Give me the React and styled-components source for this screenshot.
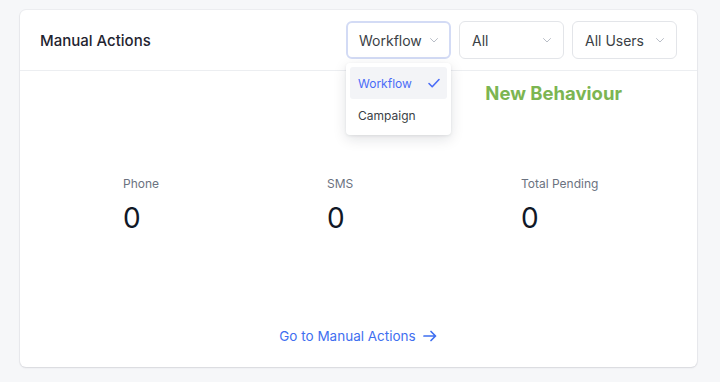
import styled, { createGlobalStyle } from 'styled-components';

const GlobalStyle = createGlobalStyle`
  html, body {
    margin: 0;
    padding: 0;
    background: #f6f7f9;
    font-family: Inter, "Noto Sans", sans-serif;
  }
`;

const filters = [
  { label: 'Workflow', width: 105, open: true },
  { label: 'All', width: 105 },
  { label: 'All Users', width: 105 },
];

const stats = [
  { label: 'Phone', value: 0 },
  { label: 'SMS', value: 0 },
  { label: 'Total Pending', value: 0 },
];

function Chevron() {
  return (
    <svg width="12" height="12" viewBox="0 0 12 12" fill="none">
      <path d="M2.5 4.5L6 8l3.5-3.5" stroke="#b9bec7" strokeWidth="1" strokeLinecap="round" strokeLinejoin="round" />
    </svg>
  );
}

function Check() {
  return (
    <svg width="14" height="14" viewBox="0 0 14 14" fill="none">
      <path d="M2 7.5l3.2 3.2L12 3.5" stroke="#4a6cf7" strokeWidth="1.6" strokeLinecap="round" strokeLinejoin="round" />
    </svg>
  );
}

function Arrow() {
  return (
    <svg width="16" height="16" viewBox="0 0 16 16" fill="none">
      <path d="M2 8h11.5M9 3.5L13.5 8 9 12.5" stroke="#3f6ff0" strokeWidth="1.7" strokeLinecap="round" strokeLinejoin="round" />
    </svg>
  );
}

export default function App() {
  return (
    <Page>
      <GlobalStyle />
      <Card>
        <Header>
          <Title>Manual Actions</Title>
          <Filters>
            {filters.map(({ label, width, open }) => (
              <SelectWrap key={label}>
                <Select $width={width} $focused={open}>
                  <span>{label}</span>
                  <Chevron />
                </Select>
                {open && (
                  <Menu>
                    <MenuItem $active>
                      <span>Workflow</span>
                      <Check />
                    </MenuItem>
                    <MenuItem>
                      <span>Campaign</span>
                    </MenuItem>
                  </Menu>
                )}
              </SelectWrap>
            ))}
          </Filters>
        </Header>
        <Body>
          <Notice>New Behaviour</Notice>
          <Stats>
            {stats.map(({ label, value }) => (
              <Stat key={label}>
                <StatLabel>{label}</StatLabel>
                <StatValue>{value}</StatValue>
              </Stat>
            ))}
          </Stats>
          <LinkRow>
            <GoLink>
              Go to Manual Actions
              <Arrow />
            </GoLink>
          </LinkRow>
        </Body>
      </Card>
    </Page>
  );
}

const Page = styled.div`
  width: 720px;
  height: 382px;
  box-sizing: border-box;
  padding: 10px 23px 15px 20px;
`;

const Card = styled.section`
  height: 357px;
  background: #fff;
  border-radius: 6px;
  box-shadow: 0 1px 2px rgba(16, 24, 40, 0.1), 0 0 0 1px rgba(16, 24, 40, 0.04);
  display: flex;
  flex-direction: column;
`;

const Header = styled.header`
  height: 61px;
  box-sizing: border-box;
  border-bottom: 1px solid #eceef1;
  display: flex;
  align-items: center;
  justify-content: space-between;
  padding: 0 20px 0 20px;
`;

const Title = styled.h2`
  margin: 0;
  font-size: 15px;
  font-weight: 500;
  color: #1f2430;
`;

const Filters = styled.div`
  display: flex;
  gap: 8px;
`;

const SelectWrap = styled.div`
  position: relative;
`;

const Select = styled.div`
  width: ${p => p.$width}px;
  height: 38px;
  box-sizing: border-box;
  display: flex;
  align-items: center;
  justify-content: space-between;
  padding: 0 ${p => (p.$focused ? 9 : 10)}px 0 ${p => (p.$focused ? 11 : 12)}px;
  border-radius: 6px;
  border: ${p => (p.$focused ? '2px solid #d3dbf5' : '1px solid #e3e5e9')};
  background: #fff;
  font-size: 14px;
  color: #3b3f46;
`;

const Menu = styled.div`
  position: absolute;
  top: 42px;
  left: 0;
  width: 105px;
  box-sizing: border-box;
  padding: 4px;
  background: #fff;
  border-radius: 4px;
  box-shadow: 0 4px 14px rgba(16, 24, 40, 0.12), 0 1px 3px rgba(16, 24, 40, 0.08);
  z-index: 2;
`;

const MenuItem = styled.div`
  height: 32px;
  display: flex;
  align-items: center;
  justify-content: space-between;
  padding: 0 6px 0 8px;
  border-radius: 3px;
  font-size: 12px;
  background: ${p => (p.$active ? '#f3f4f7' : 'transparent')};
  color: ${p => (p.$active ? '#4a6cf7' : '#3b3f46')};
`;

const Body = styled.div`
  flex: 1;
  display: flex;
  flex-direction: column;
`;

const Notice = styled.div`
  align-self: flex-end;
  margin: 10px 75px 0 0;
  font-size: 18.5px;
  font-weight: 700;
  color: #7cb552;
  line-height: 24px;
`;

const Stats = styled.div`
  display: grid;
  grid-template-columns: 204px 194px 1fr;
  padding: 71px 0 0 103px;
`;

const Stat = styled.div`
  display: flex;
  flex-direction: column;
`;

const StatLabel = styled.span`
  font-size: 12px;
  color: #6b7280;
  line-height: 16px;
`;

const StatValue = styled.span`
  margin-top: 8px;
  font-size: 28px;
  color: #111827;
  line-height: 36px;
`;

const LinkRow = styled.div`
  margin-top: auto;
  padding-bottom: 23px;
  display: flex;
  justify-content: center;
`;

const GoLink = styled.a`
  display: flex;
  align-items: center;
  gap: 6px;
  font-size: 13.5px;
  color: #3f6ff0;
  cursor: pointer;
`;
